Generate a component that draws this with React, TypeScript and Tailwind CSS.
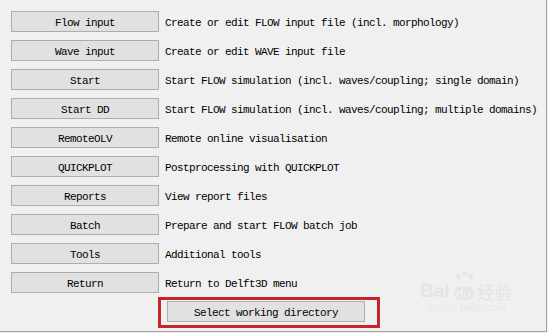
import React from 'react';

const rows: { label: string; desc: string }[] = [
    { label: 'Flow input', desc: 'Create or edit FLOW input file (incl. morphology)' },
    { label: 'Wave input', desc: 'Create or edit WAVE input file' },
    { label: 'Start', desc: 'Start FLOW simulation (incl. waves/coupling; single domain)' },
    { label: 'Start DD', desc: 'Start FLOW simulation (incl. waves/coupling; multiple domains)' },
    { label: 'RemoteOLV', desc: 'Remote online visualisation' },
    { label: 'QUICKPLOT', desc: 'Postprocessing with QUICKPLOT' },
    { label: 'Reports', desc: 'View report files' },
    { label: 'Batch', desc: 'Prepare and start FLOW batch job' },
    { label: 'Tools', desc: 'Additional tools' },
    { label: 'Return', desc: 'Return to Delft3D menu' },
];

const mono = "font-['Liberation_Mono','DejaVu_Sans_Mono',monospace] text-[11px] tracking-[-0.6px] text-black whitespace-pre relative top-[2px]";
const btn = "flex h-[21px] items-center justify-center border border-[#adadad] bg-[#e1e1e1]";

const App: React.FC = () => {
    return (
        <div className="relative h-[333px] w-[548px] overflow-hidden bg-[#f0f0f0]">
            <div className="h-[332px] w-[547px] border-r border-b border-[#a0a0a0]">
                <div className="flex flex-col gap-2 pl-[11px] pt-[11px]">
                    {rows.map((r) => (
                        <div key={r.label} className="flex h-[21px] items-center gap-[6px]">
                            <button className={`${btn} w-[148px]`}>
                                <span className={mono}>{r.label}</span>
                            </button>
                            <span className={mono}>{r.desc}</span>
                        </div>
                    ))}
                    <div className="flex h-[21px] pl-[156px]">
                        <button className={`${btn} w-[198px]`}>
                            <span className={mono}>Select working directory</span>
                        </button>
                    </div>
                </div>
            </div>

            {/* red annotation box */}
            <div className="absolute left-[158px] top-[297px] h-[31px] w-[222px] border-[3px] border-[#c3272d]" />

            {/* watermark */}
            <div className="absolute left-[420px] top-[281px] flex flex-col items-center text-[#e4e4e4]">
                <div className="flex items-end font-['Liberation_Sans',sans-serif] text-[19px] font-bold leading-none">
                    <span>Bai</span>
                    <span className="relative mx-[2px] flex h-[18px] w-[24px] items-end justify-center text-[13px]">
                        <span className="absolute left-[4px] top-[-8px] h-[5px] w-[5px] rounded-full bg-[#e4e4e4]" />
                        <span className="absolute left-[10px] top-[-11px] h-[5px] w-[5px] rounded-full bg-[#e4e4e4]" />
                        <span className="absolute left-[16px] top-[-8px] h-[5px] w-[5px] rounded-full bg-[#e4e4e4]" />
                        <span className="rounded-full bg-[#e4e4e4] px-[2px] text-[#f0f0f0]">du</span>
                    </span>
                    <span className="font-['Noto_Sans_CJK_SC',sans-serif] text-[17px] font-normal">经验</span>
                </div>
                <span className="mt-[3px] font-['Liberation_Sans',sans-serif] text-[10px] leading-none text-[#e8e8e8]">jingyan.baidu.com</span>
            </div>
        </div>
    );
};

export default App;
